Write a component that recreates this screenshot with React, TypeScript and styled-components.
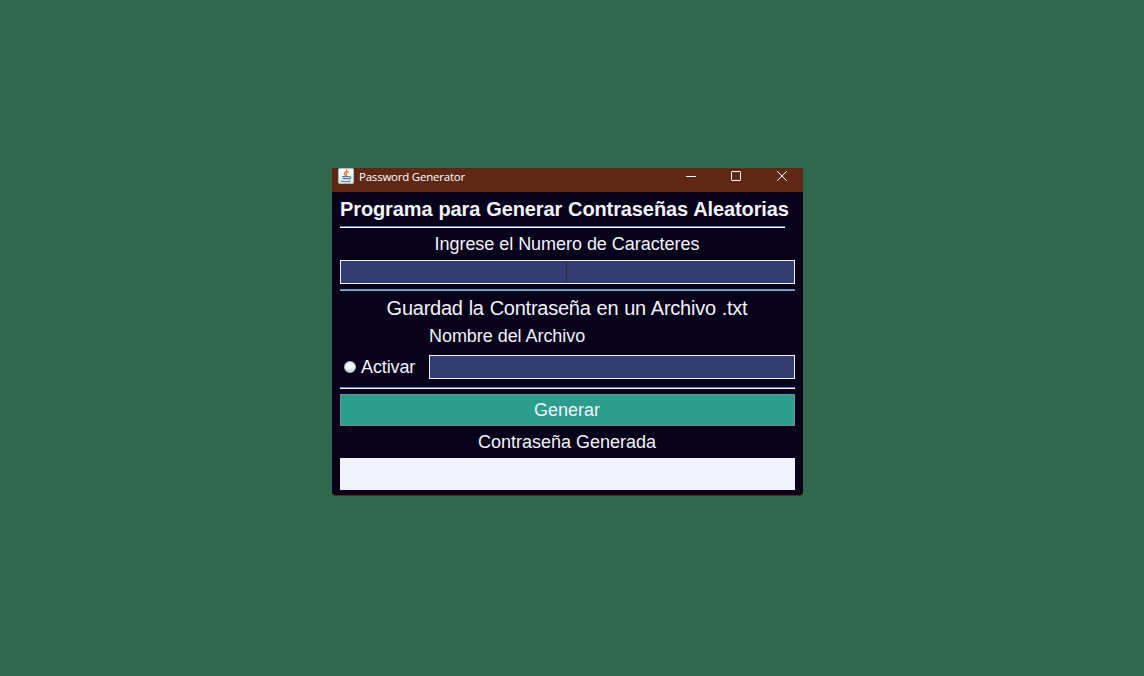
import React from 'react';
import styled, { createGlobalStyle } from 'styled-components';

const GlobalStyle = createGlobalStyle`
  * { box-sizing: border-box; }
  html, body { margin: 0; height: 100%; }
  body { background: #2f684c; overflow: hidden; }
`;

const Desktop = styled.main`
  height: 676px;
  display: flex;
  align-items: flex-start;
  padding: 168px 0 0 332px;
  background: #2f684c;
`;

const Window = styled.section`
  width: 471px;
  height: 328px;
  display: flex;
  flex-direction: column;
  background: #070219;
  border-bottom: 1px solid #552a1e;
  border-radius: 0 0 4px 4px;
  color: #f2f2fc;
  font-family: 'Liberation Sans', Arial, sans-serif;
`;

const TitleBar = styled.header`
  display: flex;
  height: 24px;
  padding-left: 6px;
  background: #602814;
  color: #fff;
`;

const WindowTitle = styled.span`
  flex: 1;
  padding-left: 5px;
  font: 11.5px/18px 'Open Sans', 'Noto Sans', sans-serif;
  letter-spacing: -0.22px;
  white-space: nowrap;
`;

const Controls = styled.div`
  display: flex;
  gap: 35px;
  padding: 3px 16px 0 0;

  svg:last-child {
    margin-left: 1px;
  }
`;

const Content = styled.div`
  display: flex;
  flex-direction: column;
  padding: 0 8px;
`;

const Text = styled.div<{ $h: number; $size?: number; $spacing?: number; $word?: number; $bold?: boolean; $left?: boolean; $top?: number }>`
  height: ${p => p.$h}px;
  margin: 0;
  padding-top: ${p => p.$top ?? 0}px;
  padding-right: ${p => (p.$left ? 0 : 1)}px;
  line-height: ${p => p.$h - (p.$top ?? 0)}px;
  font-size: ${p => p.$size ?? 18}px;
  font-weight: ${p => (p.$bold ? 700 : 400)};
  letter-spacing: ${p => p.$spacing ?? 0}px;
  word-spacing: ${p => p.$word ?? 0}px;
  text-align: ${p => (p.$left ? 'left' : 'center')};
  white-space: nowrap;
`;

const Separator = styled.hr<{ $width?: number; $low?: string }>`
  width: ${p => p.$width ?? 455}px;
  height: 2px;
  margin: 0;
  border: 0;
  border-top: 1px solid #6583c5;
  background: ${p => p.$low ?? '#ffffff'};
`;

const Field = styled.div`
  display: flex;
  flex: 1;
  height: 24px;
  background: #333d73;
  border: 1px solid #f2f2fc;
`;

const Row = styled.div`
  display: flex;
  padding-bottom: 5px;
`;

const Caret = styled.i`
  width: 1px;
  height: 22px;
  margin-left: 225px;
  background: #333333;
`;

const FileGrid = styled.div`
  display: grid;
  grid-template-columns: 89px 366px;
  grid-template-rows: 31px 24px;
  padding-bottom: 8px;
`;

const Option = styled.label`
  display: flex;
  align-items: center;
  gap: 5px;
  padding-left: 4px;
`;

const Radio = styled.span`
  width: 12px;
  height: 12px;
  border-radius: 50%;
  border: 1px solid #aebfcd;
  background: linear-gradient(#e3ebf3, #ffffff 45%, #c4d5e4);
`;

const Button = styled.button`
  height: 32px;
  margin: 5px 0 0;
  padding: 0 1px 0 0;
  background: #2a9d8d;
  border: 1px solid #7b8b99;
  color: #f2f2fc;
  font: 18px/30px 'Liberation Sans', Arial, sans-serif;
`;

const Output = styled.div`
  height: 32px;
  background: #f2f2fc;
`;

const JavaIcon = () => (
  <svg width="16" height="16" viewBox="0 0 16 16">
    <defs>
      <linearGradient id="tile" x2="0" y2="1">
        <stop stopColor="#ffffff" />
        <stop offset="1" stopColor="#dde5ea" />
      </linearGradient>
    </defs>
    <rect x=".5" y=".5" width="15" height="15" rx="1" fill="url(#tile)" stroke="#a8bac5" />
    <g fill="none" strokeLinecap="round">
      <path d="M8.8 1.7C9 3.6 5.8 4 6.6 6c.2.6.8 1 .9 1.7M10.4 3.7C8.7 4.4 7.7 5.1 8.4 6.2c.3.5.2 1-.2 1.4" stroke="#ee8128" strokeWidth="1.3" />
      <path d="M4.6 8.6h6.2M5.3 10.6h4.8M3.3 13c2 .9 6.8.9 9 0M11.5 8.7c2-.2 1.6 1.8-.4 2.2" stroke="#517b9d" strokeWidth="1.1" />
    </g>
  </svg>
);

export default function App() {
  return (
    <>
      <GlobalStyle />
      <Desktop>
        <Window>
          <TitleBar>
            <JavaIcon />
            <WindowTitle>Password Generator</WindowTitle>
            <Controls>
              <svg width="10" height="10" viewBox="0 0 10 10"><path d="M0 5.5h10" stroke="#fff" /></svg>
              <svg width="10" height="10" viewBox="0 0 10 10"><rect x=".5" y=".5" width="9" height="9" rx=".6" fill="none" stroke="#fff" /></svg>
              <svg width="10" height="10" viewBox="0 0 10 10"><path d="M.2.2l9.6 9.6M9.8.2L.2 9.8" stroke="#fff" /></svg>
            </Controls>
          </TitleBar>
          <Content>
            <Text as="h1" $h={34} $size={20} $spacing={-0.11} $word={0.5} $bold $left>Programa para Generar Contraseñas Aleatorias</Text>
            <Separator $width={445} />
            <Text $h={32} $spacing={-0.04}>Ingrese el Numero de Caracteres</Text>
            <Row>
              <Field><Caret /></Field>
            </Row>
            <Separator $low="#76bdbc" />
            <Text $h={33} $size={20} $spacing={-0.25} $word={0.65} $top={2}>Guardad la Contraseña en un Archivo .txt</Text>
            <FileGrid>
              <span />
              <Text $h={24} $spacing={-0.05} $left>Nombre del Archivo</Text>
              <Option>
                <Radio />
                <Text $h={24} $spacing={-0.12}>Activar</Text>
              </Option>
              <Field />
            </FileGrid>
            <Separator />
            <Button>Generar</Button>
            <Text $h={32}>Contraseña Generada</Text>
            <Output />
          </Content>
        </Window>
      </Desktop>
    </>
  );
}
